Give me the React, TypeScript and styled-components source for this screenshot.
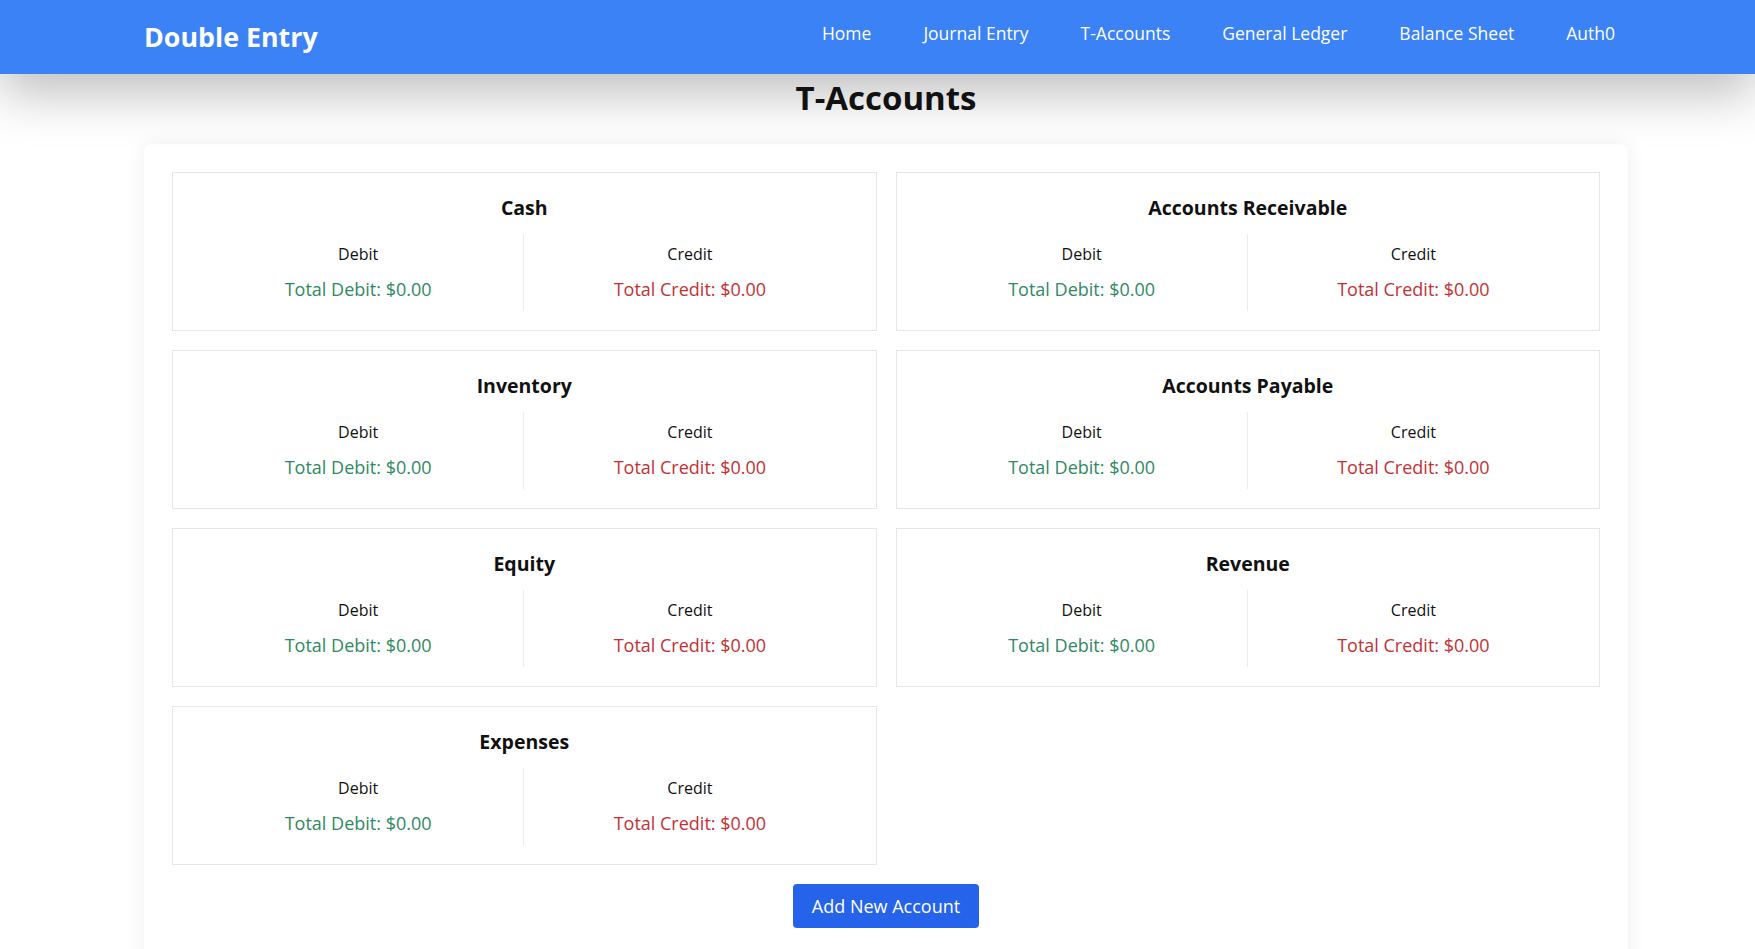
import React from "react";
import styled, { createGlobalStyle } from "styled-components";

const GlobalStyle = createGlobalStyle`
  * { box-sizing: border-box; }
  html, body { margin: 0; padding: 0; }
  body {
    background: #ffffff;
    font-family: "Open Sans", "Noto Sans", sans-serif;
    color: #111;
  }
`;

const Header = styled.header`
  position: relative;
  z-index: 2;
  background: #3b82f6;
  height: 74px;
  box-shadow: 0 20px 50px rgba(0, 0, 0, 0.25);
`;

const HeaderInner = styled.div`
  width: 1484px;
  margin: 0 127px 0 144px;
  height: 100%;
  display: flex;
  align-items: center;
  justify-content: space-between;
`;

const Logo = styled.div`
  color: #fff;
  font-weight: 700;
  font-size: 26.8px;
  line-height: 42px;
`;

const Nav = styled.nav`
  display: flex;
  align-self: flex-start;
  margin-top: 19px;
  gap: 52px;
  padding-right: 13px;
`;

const NavLink = styled.a`
  color: #fff;
  font-size: 17.5px;
  line-height: 28px;
  text-decoration: none;
`;

const Main = styled.main`
  width: 1484px;
  margin: 0 127px 0 144px;
`;

const Title = styled.h1`
  margin: 0;
  text-align: center;
  font-size: 33px;
  line-height: 48px;
  font-weight: 700;
  position: relative;
  z-index: 3;
`;

const Panel = styled.section`
  margin-top: 22px;
  background: #fff;
  border-radius: 8px;
  box-shadow: 0 0 20px rgba(0, 0, 0, 0.07);
  padding: 28px 28px 40px;
`;

const Grid = styled.div`
  display: grid;
  grid-template-columns: 1fr 1fr;
  gap: 19px;
`;

const Card = styled.div`
  border: 1px solid #e6e6e6;
  padding: 21px 20px 19px;
  background: #fff;
`;

const CardTitle = styled.h3`
  margin: 0 0 12px;
  text-align: center;
  font-size: 19.5px;
  line-height: 28px;
  font-weight: 700;
`;

const Columns = styled.div`
  display: grid;
  grid-template-columns: 1fr 1fr;
`;

const Column = styled.div<{ $divider?: boolean }>`
  padding: 8px;
  text-align: center;
  border-right: ${(p) => (p.$divider ? "1px solid #ececec" : "none")};
`;

const Label = styled.div`
  font-size: 16px;
  line-height: 24px;
  margin-bottom: 9px;
`;

const Total = styled.div<{ $kind: "debit" | "credit" }>`
  font-size: 18px;
  line-height: 28px;
  color: ${(p) => (p.$kind === "debit" ? "#2f8a63" : "#c53034")};
`;

const Actions = styled.div`
  display: flex;
  justify-content: center;
  margin-top: 19px;
`;

const Button = styled.button`
  background: #2563eb;
  color: #fff;
  border: none;
  border-radius: 4px;
  padding: 8px 19px;
  font-family: inherit;
  font-size: 18px;
  line-height: 28px;
  cursor: pointer;
`;

const accounts = [
  "Cash",
  "Accounts Receivable",
  "Inventory",
  "Accounts Payable",
  "Equity",
  "Revenue",
  "Expenses",
];

const navItems = [
  "Home",
  "Journal Entry",
  "T-Accounts",
  "General Ledger",
  "Balance Sheet",
  "Auth0",
];

export default function App() {
  return (
    <>
      <GlobalStyle />
      <Header>
        <HeaderInner>
          <Logo>Double Entry</Logo>
          <Nav>
            {navItems.map((n) => (
              <NavLink key={n} href="#">
                {n}
              </NavLink>
            ))}
          </Nav>
        </HeaderInner>
      </Header>
      <Main>
        <Title>T-Accounts</Title>
        <Panel>
          <Grid>
            {accounts.map((a) => (
              <Card key={a}>
                <CardTitle>{a}</CardTitle>
                <Columns>
                  <Column $divider>
                    <Label>Debit</Label>
                    <Total $kind="debit">Total Debit: $0.00</Total>
                  </Column>
                  <Column>
                    <Label>Credit</Label>
                    <Total $kind="credit">Total Credit: $0.00</Total>
                  </Column>
                </Columns>
              </Card>
            ))}
          </Grid>
          <Actions>
            <Button>Add New Account</Button>
          </Actions>
        </Panel>
      </Main>
    </>
  );
}
